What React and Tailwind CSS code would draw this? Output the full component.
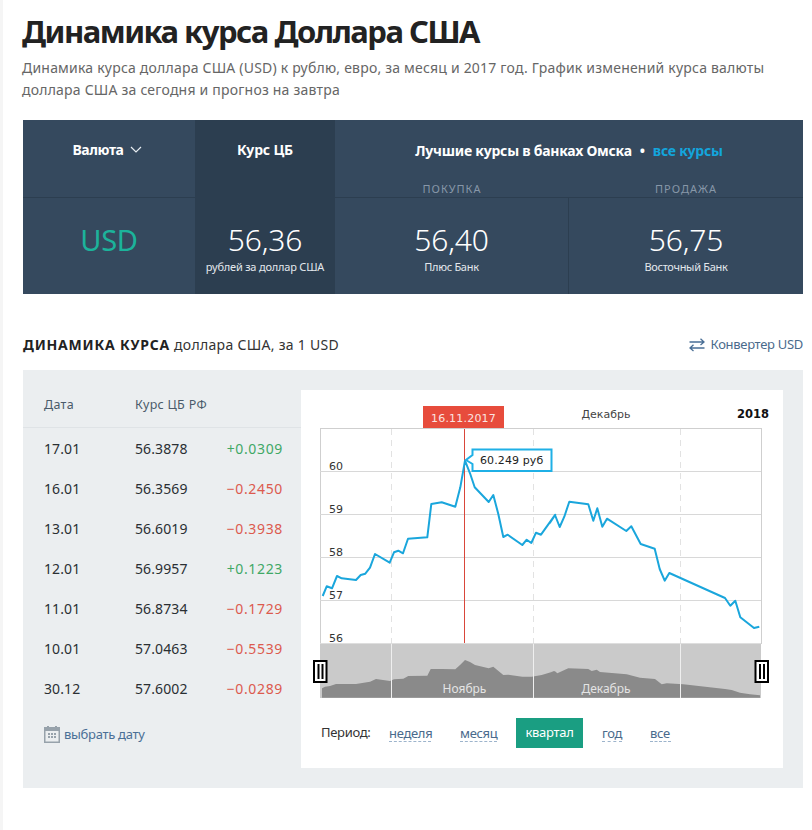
import React from "react";

const font = { fontFamily: '"Noto Sans", "Open Sans", sans-serif' };

const rows = [
  ["17.01", "56.3878", "+0.0309", true],
  ["16.01", "56.3569", "−0.2450", false],
  ["13.01", "56.6019", "−0.3938", false],
  ["12.01", "56.9957", "+0.1223", true],
  ["11.01", "56.8734", "−0.1729", false],
  ["10.01", "57.0463", "−0.5539", false],
  ["30.12", "57.6002", "−0.0289", false],
];

const z4 = [[68,618],[80,589],[96,595],[111,558],[125,565],[168,570],[182,555],[196,551],[210,533],[225,492],[269,518],[282,487],[295,482],[309,490],[324,446],[382,442],[394,342],[425,337],[466,350],[481,292],[495,212],[510,250],[524,292],[566,336],[580,315],[595,372],[610,441],[623,434],[667,465],[680,449],[694,459],[708,428],[723,434],[766,374]];
const z5 = [[0,398],[15,375],[29,411],[43,380],[58,335],[115,343],[130,392],[142,355],[157,410],[171,386],[229,423],[244,409],[272,462],[314,476],[329,537],[344,572],[358,549],[525,624],[541,647],[556,632],[571,682],[612,714],[628,710]];
const linePts = [
  ...z4.map(([x, y]) => [300 + x / 3, 390 + y / 3]),
  ...z5.map(([x, y]) => [550 + x / 3, 390 + y / 3]),
].map((p) => p.map((n) => n.toFixed(1)).join(",")).join(" ");

const n6 = [[66,175],[75,170],[90,168],[108,162],[168,162],[210,155],[228,147],[270,153],[282,148],[310,146],[325,138],[382,137],[392,117],[425,117],[466,118],[480,105],[495,90],[510,96],[525,105],[566,115],[580,110],[610,135],[625,134],[667,140],[695,140],[725,135],[765,123]];
const n7 = [[0,125],[15,124],[22,130],[55,115],[115,117],[125,123],[140,119],[150,126],[230,133],[270,143],[315,147],[335,163],[350,160],[400,163],[525,177],[545,180],[570,188],[600,193],[630,196]];
const areaPts = [
  [322, 697.7],
  ...n6.map(([x, y]) => [300 + x / 3, 630 + y / 3]),
  ...n7.map(([x, y]) => [550 + x / 3, 630 + y / 3]),
  [760, 697.7],
].map((p) => p.map((n) => n.toFixed(1)).join(",")).join(" ");

function Handle({ x }) {
  return (
    <g>
      <rect x={x + 1} y={661} width={12.5} height={21} fill="#fff" stroke="#000" strokeWidth="2" />
      <rect x={x + 4.5} y={664} width={2} height={15} fill="#000" />
      <rect x={x + 8.5} y={664} width={2} height={15} fill="#000" />
    </g>
  );
}

function Chart() {
  const ds = { fontFamily: '"DejaVu Sans", sans-serif' };
  return (
    <svg width="482" height="310" viewBox="301 390 482 310" className="block" style={ds}>
      <rect x="423" y="406" width="81" height="23" fill="#e74c3c" />
      <text x="463.5" y="421.5" textAnchor="middle" fontSize="11" fill="#fbe3e0" letterSpacing="0.2">16.11.2017</text>
      <text x="606" y="418" textAnchor="middle" fontSize="11" fill="#444">Декабрь</text>
      <text x="769" y="418" textAnchor="end" fontSize="11.5" fontWeight="700" fill="#111">2018</text>

      <rect x="320.5" y="428.5" width="441" height="215" fill="#fff" stroke="#cfcfcf" />
      {[471.5, 514.5, 557.5, 600.5].map((y) => (
        <line key={y} x1="320" x2="761" y1={y} y2={y} stroke="#d8d8d8" />
      ))}
      {[391.5, 533.5, 680.5].map((x) => (
        <line key={x} x1={x} x2={x} y1="429" y2="643" stroke="#e2e2e2" strokeDasharray="6 5" />
      ))}
      {[["60", 470], ["59", 513], ["58", 556], ["57", 599], ["56", 642]].map(([t, y]) => (
        <text key={t} x="329" y={y} fontSize="11" fill="#333">{t}</text>
      ))}
      <line x1="464.5" x2="464.5" y1="429" y2="643" stroke="#d9463a" />
      <polyline points={linePts} fill="none" stroke="#1aa6dc" strokeWidth="2" strokeLinejoin="round" />

      <polygon points="472.5,449.5 551.5,449.5 551.5,471 472.5,471 472.5,464 466,460 472.5,455" fill="#fff" stroke="#1fb0e6" strokeWidth="2" />
      <text x="480" y="464" fontSize="11" fill="#222" letterSpacing="0.1">60.249 руб</text>

      <rect x="320" y="643" width="441" height="55" fill="#cacaca" />
      <polygon points={areaPts} fill="#8a8a8a" />
      {[391.5, 533.5, 680.5].map((x) => (
        <line key={x} x1={x} x2={x} y1="644" y2="698" stroke="#efefef" />
      ))}
      <line x1="320" x2="761" y1="643.5" y2="643.5" stroke="#dedede" />
      <text x="464.5" y="693" textAnchor="middle" fontSize="12" fill="#e4e4e4" style={font}>Ноябрь</text>
      <text x="606" y="693" textAnchor="middle" fontSize="12" fill="#e4e4e4" style={font}>Декабрь</text>
      <Handle x={313} />
      <Handle x={754.5} />
    </svg>
  );
}

function Dash({ children, className }) {
  return (
    <span className={`border-b border-dashed border-[#9db4cc] text-[13px] leading-[16px] text-[#4a6a8c] tracking-[-0.3px] ${className}`}>
      {children}
    </span>
  );
}

export default function App() {
  return (
    <div className="w-[812px] h-[830px] bg-white border-l-[3px] border-[#f5f5f5] pl-[20px] overflow-hidden" style={font}>
      <h1 className="pt-[11px] text-[31px] leading-[40px] font-bold text-[#222] tracking-[-1.5px] -ml-[1px]">
        Динамика курса Доллара США
      </h1>
      <p className="mt-[6px] w-[750px] -ml-[1px] text-[14px] leading-[22px] text-[#666] tracking-[0.21px]">
        Динамика курса доллара США (USD) к рублю, евро, за месяц и 2017 год. График изменений курса валюты доллара США за сегодня и прогноз на завтра
      </p>

      <div className="mt-[19px] w-[780px] h-[174px] bg-[#35495e] flex text-white">
        <div className="w-[172px] flex flex-col">
          <div className="h-[78px] border-b border-[#2c3e50] pt-[19px] flex justify-center">
            <span className="flex items-start gap-[6px] mr-[4px] text-[14px] leading-[22px] font-bold tracking-[-0.4px]">
              Валюта
              <svg width="12" height="22" viewBox="0 0 12 22" fill="none" stroke="#e8edf2" strokeWidth="1.2"><path d="M1 8l5 5 5-5" /></svg>
            </span>
          </div>
          <div className="flex-1 pt-[22px] text-center text-[29px] leading-[40px] text-[#1cb39b] tracking-[-0.3px]">USD</div>
        </div>
        <div className="w-[140px] bg-[#2c3e50] flex flex-col">
          <div className="h-[78px] border-b border-[#2c3e50] pt-[19px] text-center text-[14px] leading-[22px] font-bold tracking-[-0.2px]">Курс ЦБ</div>
          <div className="flex-1 pt-[22px] text-center">
            <div className="text-[30px] leading-[40px] font-light tracking-[-0.2px]">56,36</div>
            <div className="text-[11px] leading-[14px] text-[#e3e8ed] tracking-[-0.2px]">рублей за доллар США</div>
          </div>
        </div>
        <div className="flex-1 flex flex-col">
          <div className="h-[78px] border-b border-[#2c3e50] flex flex-col">
            <div className="pt-[20px] flex justify-center gap-[8px] text-[14px] leading-[22px] font-bold tracking-[-0.25px]">
              <span>Лучшие курсы в банках Омска</span>
              <span>•</span>
              <span className="text-[#13a5dc]">все курсы</span>
            </div>
            <div className="mt-[20px] flex text-[11px] leading-[14px] text-[#8797a8] tracking-[1px]">
              <span className="w-[234px] text-center">ПОКУПКА</span>
              <span className="w-[234px] text-center">ПРОДАЖА</span>
            </div>
          </div>
          <div className="flex-1 flex">
            <div className="w-[234px] pt-[22px] text-center border-r border-[#2c3e50]">
              <div className="text-[30px] leading-[40px] font-light tracking-[-0.2px]">56,40</div>
              <div className="text-[11px] leading-[14px] text-[#e3e8ed] tracking-[-0.3px]">Плюс Банк</div>
            </div>
            <div className="flex-1 pt-[22px] text-center">
              <div className="text-[30px] leading-[40px] font-light tracking-[-0.2px]">56,75</div>
              <div className="text-[11px] leading-[14px] text-[#e3e8ed] tracking-[-0.3px]">Восточный Банк</div>
            </div>
          </div>
        </div>
      </div>

      <div className="mt-[40px] w-[780px] h-[22px] flex justify-between items-center">
        <div className="text-[14px] leading-[22px] text-[#333] tracking-[0.3px]">
          <b className="text-[#222] tracking-[0.8px]">ДИНАМИКА КУРСА</b> доллара США, за 1 USD
        </div>
        <div className="flex items-center gap-[6px] text-[13px] text-[#4a6a8c] tracking-[-0.3px]">
          <svg width="16" height="14" viewBox="0 0 16 14" fill="none" stroke="#4a6f96" strokeWidth="1.3">
            <path d="M0.5 4h14.5M11.5 0.8L15 4l-3.500 3" />
            <path d="M15.500 10H1M4.500 6.800L1 10l3.500 3" />
          </svg>
          Конвертер USD
        </div>
      </div>

      <div className="mt-[14px] w-[780px] h-[418px] bg-[#ebeef0] flex items-start">
        <div className="w-[278px]">
          <div className="h-[58px] border-b border-[#dfe3e6] flex items-start pt-[24px] pl-[21px] text-[12.500px] leading-[22px] text-[#4a5a6a] tracking-[0.3px]">
            <span className="w-[91px]">Дата</span>
            <span>Курс ЦБ РФ</span>
          </div>
          {rows.map(([d, v, c, up]) => (
            <div key={d} className="h-[40px] flex items-center pl-[21px] pr-[18px] text-[14px] text-[#2a2f33] tracking-[0.1px] first:h-[41px]">
              <span className="w-[91px]">{d}</span>
              <span>{v}</span>
              <span className={`ml-auto tracking-[0.65px] ${up ? "text-[#3fa866]" : "text-[#dc5a4e]"}`}>{c}</span>
            </div>
          ))}
          <div className="mt-[16px] pl-[21px] flex items-center gap-[4px] text-[13px] leading-[20px] text-[#4a6f96] tracking-[-0.3px]">
            <svg width="16" height="17" viewBox="0 0 16 17">
              <rect x="0" y="1" width="16" height="16" fill="#97a2ab" />
              <rect x="1.500" y="5" width="13" height="10.500" fill="#ebeef0" />
              <rect x="3" y="0" width="2" height="3" fill="#97a2ab" />
              <rect x="11" y="0" width="2" height="3" fill="#97a2ab" />
              {[4, 7, 10].map((x) => [7, 10].map((y) => <rect key={x + "-" + y} x={x} y={y} width="2" height="2" fill="#97a2ab" />))}
            </svg>
            выбрать дату
          </div>
        </div>
        <div className="mt-[20px] w-[482px] h-[378px] bg-white">
          <Chart />
          <div className="mt-[18px] h-[30px] pl-[20px] flex items-center text-[13px] text-[#333] tracking-[-0.3px]">
            <span className="w-[68px]">Период:</span>
            <Dash className="w-[42px]">неделя</Dash>
            <Dash className="ml-[29px] w-[37px]">месяц</Dash>
            <span className="ml-[19px] w-[67px] h-[30px] bg-[#1a9e82] text-white flex items-center justify-center">квартал</span>
            <Dash className="ml-[19px] w-[20px]">год</Dash>
            <Dash className="ml-[28px] w-[21px]">все</Dash>
          </div>
        </div>
      </div>
    </div>
  );
}
